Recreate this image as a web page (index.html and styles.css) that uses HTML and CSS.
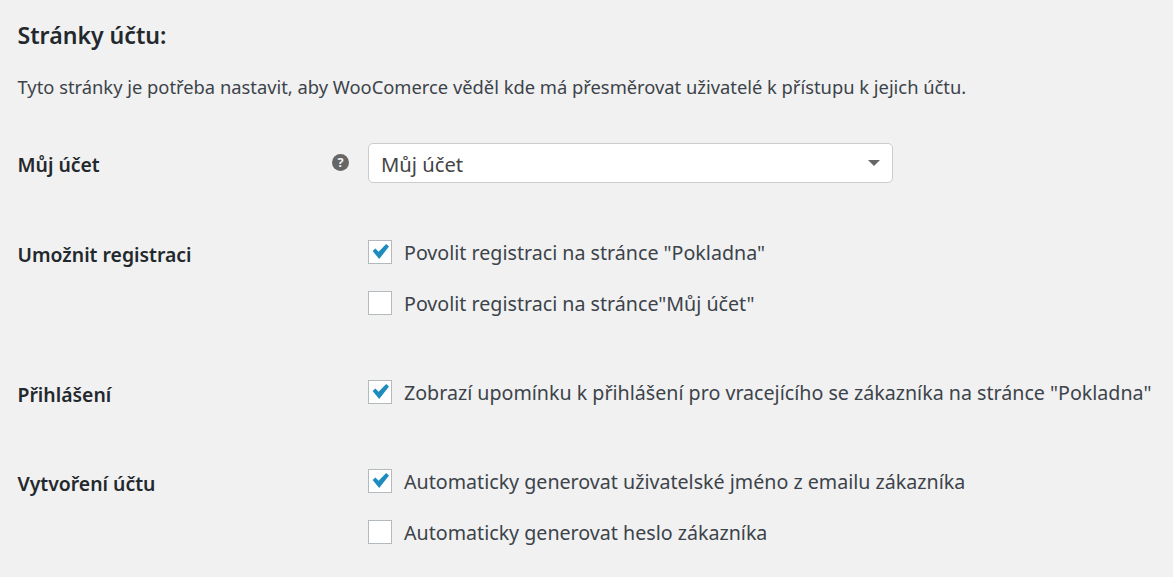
FILE: index.html
```html
<!DOCTYPE html>
<html lang="cs">
<head>
<meta charset="utf-8">
<title>Stránky účtu</title>
<link rel="stylesheet" href="styles.css">
</head>
<body>
<h2 class="title">Stránky účtu:</h2>
<p class="intro">Tyto stránky je potřeba nastavit, aby WooComerce věděl kde má přesměrovat uživatelé k přístupu k jejich účtu.</p>
<div class="row row-select">
  <div class="label">Můj účet</div>
  <div class="help"><svg viewBox="0 0 20 20" width="17" height="17"><circle cx="10" cy="10" r="10" fill="#666"/><text x="10" y="15.5" text-anchor="middle" class="qmark">?</text></svg></div>
  <div class="field"><div class="select"><span>Můj účet</span><i class="arrow"></i></div></div>
</div>
<div class="row row-two">
  <div class="label">Umožnit registraci</div>
  <div class="help"></div>
  <div class="field">
    <label class="check"><span class="box"><svg viewBox="0 0 22 22" width="22" height="22"><polygon class="tick" points="3.6,10 6.4,7.4 9.6,10.8 17.2,3 20,5.4 10.2,18"/></svg></span>Povolit registraci na stránce "Pokladna"</label>
    <label class="check"><span class="box"></span>Povolit registraci na stránce"Můj účet"</label>
  </div>
</div>
<div class="row row-one">
  <div class="label">Přihlášení</div>
  <div class="help"></div>
  <div class="field">
    <label class="check"><span class="box"><svg viewBox="0 0 22 22" width="22" height="22"><polygon class="tick" points="3.6,10 6.4,7.4 9.6,10.8 17.2,3 20,5.4 10.2,18"/></svg></span>Zobrazí upomínku k přihlášení pro vracejícího se zákazníka na stránce "Pokladna"</label>
  </div>
</div>
<div class="row row-two">
  <div class="label">Vytvoření účtu</div>
  <div class="help"></div>
  <div class="field">
    <label class="check"><span class="box"><svg viewBox="0 0 22 22" width="22" height="22"><polygon class="tick" points="3.6,10 6.4,7.4 9.6,10.8 17.2,3 20,5.4 10.2,18"/></svg></span>Automaticky generovat uživatelské jméno z emailu zákazníka</label>
    <label class="check"><span class="box"></span>Automaticky generovat heslo zákazníka</label>
  </div>
</div>
</body>
</html>
```
FILE: styles.css
```css
html, body { margin: 0; padding: 0; }
body {
  width: 1173px;
  height: 577px;
  overflow: hidden;
  background: #f1f1f1;
  color: #3c434a;
  font-family: "Noto Sans", "Open Sans", sans-serif;
  font-size: 19.65px;
  box-sizing: border-box;
  padding: 21px 0 0 17.5px;
}
.title {
  margin: 0;
  font-size: 23.1px;
  line-height: 28px;
  font-weight: 600;
  color: #23282d;
}
.intro {
  margin: 24px 0 0;
  line-height: 28px;
  font-size: 18.33px;
}
.row {
  display: flex;
}
.row-select { margin-top: 42px; height: 40px; }
.row-two { margin-top: 56px; }
.row-one { margin-top: 63px; }
.row-one + .row-two { margin-top: 60px; }
.label {
  width: 314.5px;
  flex: none;
  font-weight: 600;
  font-size: 19.4px;
  color: #23282d;
  line-height: 26px;
}
.row-select .label { line-height: 44px; }
.row-two .label, .row-one .label { padding-top: 3px; }
.help {
  width: 36px;
  flex: none;
  padding-top: 11px;
  box-sizing: border-box;
}
.help svg { display: block; }
.qmark { font: 700 15px "Noto Sans", sans-serif; fill: #f1f1f1; }
.select {
  width: 525px;
  height: 40px;
  box-sizing: border-box;
  background: #fff;
  border: 1px solid #ccc;
  border-radius: 5px;
  padding: 2px 0 0 12px;
  display: flex;
  align-items: center;
  justify-content: space-between;
  color: #444;
  font-size: 20.2px;
}
.arrow {
  width: 0; height: 0;
  border-style: solid;
  border-width: 6px 6px 0;
  border-color: #666 transparent transparent;
  margin: -2px 12px 0 0;
}
.check {
  display: flex;
  align-items: center;
  height: 26px;
}
.check + .check { margin-top: 25px; }
.box {
  width: 24px; height: 24px;
  box-sizing: border-box;
  background: #fff;
  border: 1px solid #b4b9be;
  margin-right: 12px;
  flex: none;
}
.box svg { display: block; }
.tick { fill: #1e8cbe; }
```
